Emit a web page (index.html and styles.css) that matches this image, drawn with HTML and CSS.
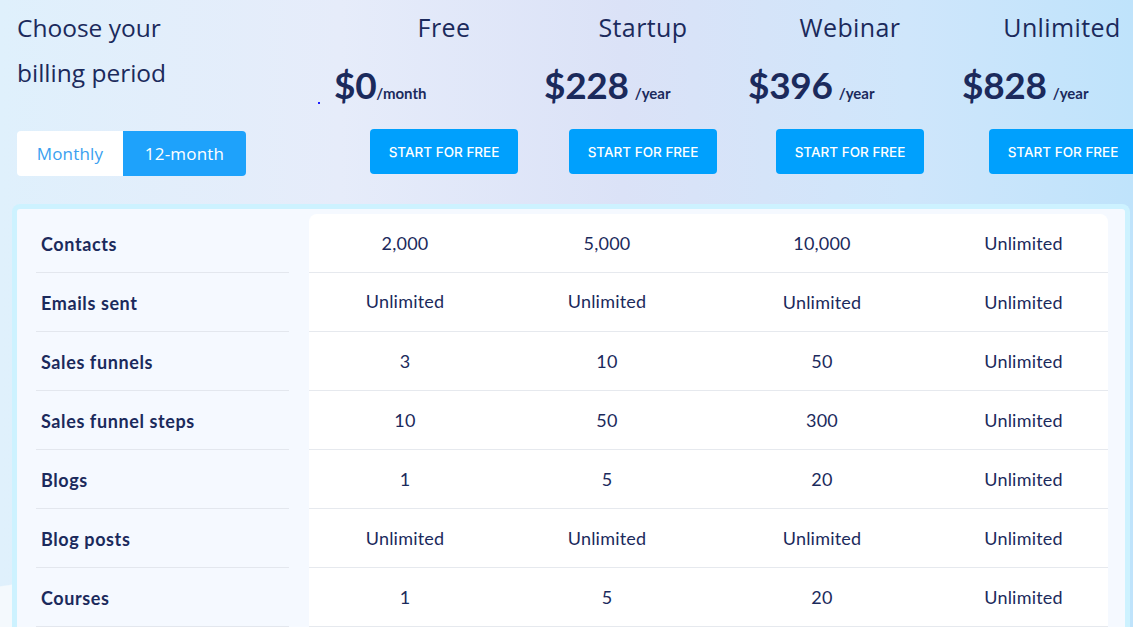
FILE: index.html
```html
<!DOCTYPE html>
<html>
<head>
  <meta name="viewport" content="width=device-width, initial-scale=1.0">
  <link rel="stylesheet" href="styles.css">
</head>
<body>
  <div class="page">
    <div class="header">
      <div class="billing">
        <h2 class="billing-title">Choose your<br>billing period</h2>
        <div class="toggle">
          <div class="toggle-item">Monthly</div>
          <div class="toggle-item active">12-month</div>
        </div>
      </div>

      <div class="plan plan-free">
        <div class="plan-name">Free</div>
        <div class="plan-price"><span class="dot"></span><span class="amount">$0</span><span class="period">/month</span></div>
        <button class="plan-btn">START FOR FREE</button>
      </div>
      <div class="plan plan-startup">
        <div class="plan-name">Startup</div>
        <div class="plan-price"><span class="amount">$228</span><span class="period gap">/year</span></div>
        <button class="plan-btn">START FOR FREE</button>
      </div>
      <div class="plan plan-webinar">
        <div class="plan-name">Webinar</div>
        <div class="plan-price"><span class="amount">$396</span><span class="period gap">/year</span></div>
        <button class="plan-btn">START FOR FREE</button>
      </div>
      <div class="plan plan-unlimited">
        <div class="plan-name">Unlimited</div>
        <div class="plan-price"><span class="amount">$828</span><span class="period gap">/year</span></div>
        <button class="plan-btn">START FOR FREE</button>
      </div>
    </div>

    <div class="card">
      <div class="card-inner">
        <div class="row first">
          <div class="label">Contacts</div>
          <div class="cell">2,000</div><div class="cell">5,000</div><div class="cell">10,000</div><div class="cell">Unlimited</div>
        </div>
        <div class="row">
          <div class="label">Emails sent</div>
          <div class="cell up">Unlimited</div><div class="cell up">Unlimited</div><div class="cell">Unlimited</div><div class="cell">Unlimited</div>
        </div>
        <div class="row">
          <div class="label">Sales funnels</div>
          <div class="cell">3</div><div class="cell">10</div><div class="cell">50</div><div class="cell">Unlimited</div>
        </div>
        <div class="row">
          <div class="label">Sales funnel steps</div>
          <div class="cell">10</div><div class="cell">50</div><div class="cell">300</div><div class="cell">Unlimited</div>
        </div>
        <div class="row">
          <div class="label">Blogs</div>
          <div class="cell">1</div><div class="cell">5</div><div class="cell">20</div><div class="cell">Unlimited</div>
        </div>
        <div class="row">
          <div class="label">Blog posts</div>
          <div class="cell">Unlimited</div><div class="cell">Unlimited</div><div class="cell">Unlimited</div><div class="cell">Unlimited</div>
        </div>
        <div class="row">
          <div class="label">Courses</div>
          <div class="cell">1</div><div class="cell">5</div><div class="cell">20</div><div class="cell">Unlimited</div>
        </div>
      </div>
    </div>
  </div>
</body>
</html>
```

FILE: styles.css
```css
* {
  margin: 0;
  padding: 0;
  box-sizing: border-box;
}

body {
  width: 1133px;
  height: 627px;
  overflow: hidden;
  color: #1b2a5c;
  font-family: 'Lato', sans-serif;
  background:
    linear-gradient(172deg, transparent 93%, #f4f9fd 93.2%) left bottom / 20px 100% no-repeat,
    linear-gradient(90deg, #dff0fc 0%, #e6ecfa 30%, #dbe2f7 55%, #cfe6fb 80%, #bfe3fb 100%);
}

.page {
  width: 1133px;
}

/* header */

.header {
  display: flex;
  height: 204px;
  padding-top: 5px;
}

.billing {
  width: 344px;
  flex-shrink: 0;
  padding-left: 17px;
}

.billing-title {
  font-family: 'Open Sans', sans-serif;
  font-weight: 400;
  font-size: 24.5px;
  line-height: 45px;
  color: #1b2a5c;
}

.toggle {
  display: flex;
  width: 229px;
  height: 45px;
  margin-top: 36px;
  border-radius: 4px;
  overflow: hidden;
}

.toggle-item {
  display: flex;
  align-items: center;
  justify-content: center;
  width: 106px;
  background: #fff;
  color: #3a9ff0;
  font-family: 'Open Sans', sans-serif;
  font-size: 17px;
  letter-spacing: 0.2px;
}

.toggle-item.active {
  width: 123px;
  background: #1ea2fb;
  color: #fff;
}

.plan {
  display: flex;
  flex-direction: column;
  align-items: center;
  flex-shrink: 0;
}

.plan-free { width: 200px; }
.plan-startup { width: 198px; }
.plan-webinar { width: 216px; }
.plan-unlimited { width: 208px; }

.plan-name {
  font-family: 'Open Sans', sans-serif;
  font-size: 25px;
  letter-spacing: 0.4px;
  line-height: 45px;
}

.plan-price {
  align-self: flex-start;
  display: flex;
  align-items: baseline;
  height: 72px;
  padding-top: 12px;
  padding-left: 4px;
}

.plan-startup .plan-price { padding-left: 0; }
.plan-webinar .plan-price { padding-left: 6px; }
.plan-free .plan-price { margin-left: -10px; padding-left: 0; }

.dot {
  width: 2px;
  height: 2px;
  margin-left: -16px;
  margin-right: 14px;
  background: #2020ff;
  align-self: center;
  margin-top: 22px;
}

.amount {
  font-size: 37px;
  font-weight: 700;
  letter-spacing: -0.3px;
}

.period {
  font-size: 15px;
  font-weight: 700;
}

.period.gap {
  margin-left: 6px;
}

.plan-btn {
  width: 148px;
  height: 45px;
  margin-top: 7px;
  border: none;
  border-radius: 4px;
  background: #00a0fd;
  color: #fff;
  font-family: 'Inter', sans-serif;
  font-size: 13.5px;
  font-weight: 500;
}

.plan-unlimited .plan-btn {
  margin-left: 2px;
}

/* table */

.card {
  width: 1118px;
  margin-left: 12px;
  border: 5px solid #cdf2ff;
  border-bottom: none;
  border-radius: 8px 8px 0 0;
  background: #f5f9ff;
}

.card-inner {
  padding: 5px 17px 0 19px;
}

.row {
  display: grid;
  grid-template-columns: 273px 192px 212px 218px 177px;
  height: 59px;
}

.label {
  display: flex;
  align-items: center;
  margin-right: 20px;
  padding-left: 5px;
  padding-top: 1px;
  border-bottom: 1px solid #e3e7ee;
  font-size: 18px;
  font-weight: 700;
  letter-spacing: 0.6px;
  color: #1b2a5c;
}

.cell {
  display: flex;
  align-items: center;
  justify-content: center;
  background: #fff;
  border-bottom: 1px solid #e6e9ee;
  font-size: 18px;
  letter-spacing: 0.2px;
  color: #1b2a5c;
}

.cell.up {
  padding-bottom: 2px;
}

.row .cell:last-child {
  padding-left: 8px;
}

.row.first .cell:nth-child(2) {
  border-top-left-radius: 8px;
}

.row.first .cell:last-child {
  border-top-right-radius: 8px;
}
```
